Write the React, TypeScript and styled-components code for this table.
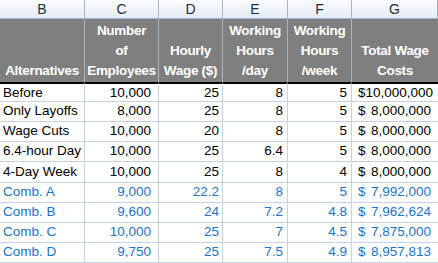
import React from 'react';
import styled, { createGlobalStyle } from 'styled-components';

const GlobalStyle = createGlobalStyle`
  html, body {
    margin: 0;
    padding: 0;
    background: #ffffff;
    overflow: hidden;
  }
  body {
    font-family: "Liberation Sans", Arial, sans-serif;
  }
`;

const GRID = '#c3d2e6';
const BLUE = '#1b74c8';

interface RowData {
  name: string;
  employees: string;
  wage: string;
  hoursDay: string;
  hoursWeek: string;
  cost: string;
  blue?: boolean;
}

const rows: RowData[] = [
  { name: 'Before', employees: '10,000', wage: '25', hoursDay: '8', hoursWeek: '5', cost: '10,000,000' },
  { name: 'Only Layoffs', employees: '8,000', wage: '25', hoursDay: '8', hoursWeek: '5', cost: '8,000,000' },
  { name: 'Wage Cuts', employees: '10,000', wage: '20', hoursDay: '8', hoursWeek: '5', cost: '8,000,000' },
  { name: '6.4-hour Day', employees: '10,000', wage: '25', hoursDay: '6.4', hoursWeek: '5', cost: '8,000,000' },
  { name: '4-Day Week', employees: '10,000', wage: '25', hoursDay: '8', hoursWeek: '4', cost: '8,000,000' },
  { name: 'Comb. A', employees: '9,000', wage: '22.2', hoursDay: '8', hoursWeek: '5', cost: '7,992,000', blue: true },
  { name: 'Comb. B', employees: '9,600', wage: '24', hoursDay: '7.2', hoursWeek: '4.8', cost: '7,962,624', blue: true },
  { name: 'Comb. C', employees: '10,000', wage: '25', hoursDay: '7', hoursWeek: '4.5', cost: '7,875,000', blue: true },
  { name: 'Comb. D', employees: '9,750', wage: '25', hoursDay: '7.5', hoursWeek: '4.9', cost: '8,957,813', blue: true },
];

const Sheet = styled.div`
  display: grid;
  grid-template-columns: 85px 74px 64px 65px 64px 86px;
  width: 438px;
  height: 263px;
  overflow: hidden;
`;

const ColLetter = styled.div`
  height: 18px;
  border-bottom: 1px solid #9eb6ce;
  border-right: 1px solid #9eb6ce;
  background: linear-gradient(#fbfcfe, #e4ebf5);
  color: #1d2d42;
  font-size: 14px;
  line-height: 18px;
  text-align: center;
  box-sizing: content-box;
  &:last-child {
    border-right: none;
  }
`;

const HeadCell = styled.div`
  height: 63px;
  background: #7f7f7f;
  border-right: 1px solid #a7b4c4;
  color: #ffffff;
  font-weight: bold;
  font-size: 13.5px;
  letter-spacing: -0.3px;
  line-height: 20px;
  display: flex;
  flex-direction: column;
  justify-content: flex-end;
  align-items: center;
  text-align: center;
  white-space: nowrap;
  padding-bottom: 1px;
  box-sizing: border-box;
`;

const Cell = styled.div<{ $align?: 'left' | 'right'; $blue?: boolean; $first?: boolean; $pad?: number }>`
  height: 20px;
  box-sizing: border-box;
  border-right: 1px solid ${GRID};
  border-bottom: 1px solid ${GRID};
  border-top: ${(p) => (p.$first ? '2px solid #000' : 'none')};
  color: ${(p) => (p.$blue ? BLUE : '#000')};
  font-size: 13.5px;
  line-height: 17px;
  white-space: nowrap;
  text-align: ${(p) => p.$align ?? 'right'};
  padding: 0 ${(p) => p.$pad ?? 5}px 0 3px;
`;

const MoneyCell = styled(Cell)`
  display: flex;
  justify-content: space-between;
  padding: 0 7px 0 6px;
  border-right: none;
`;

const App: React.FC = () => {
  return (
    <>
      <GlobalStyle />
      <Sheet>
        {['B', 'C', 'D', 'E', 'F', 'G'].map((l) => (
          <ColLetter key={l}>{l}</ColLetter>
        ))}
        <HeadCell>Alternatives</HeadCell>
        <HeadCell>
          <span>Number</span>
          <span>of</span>
          <span>Employees</span>
        </HeadCell>
        <HeadCell>
          <span>Hourly</span>
          <span>Wage ($)</span>
        </HeadCell>
        <HeadCell>
          <span>Working</span>
          <span>Hours</span>
          <span>/day</span>
        </HeadCell>
        <HeadCell>
          <span>Working</span>
          <span>Hours</span>
          <span>/week</span>
        </HeadCell>
        <HeadCell style={{ borderRight: 'none' }}>
          <span>Total Wage</span>
          <span>Costs</span>
        </HeadCell>
        {rows.map((r, i) => (
          <React.Fragment key={r.name}>
            <Cell $align="left" $blue={r.blue} $first={i === 0}>{r.name}</Cell>
            <Cell $blue={r.blue} $first={i === 0} $pad={7}>{r.employees}</Cell>
            <Cell $blue={r.blue} $first={i === 0} $pad={3}>{r.wage}</Cell>
            <Cell $blue={r.blue} $first={i === 0} $pad={4}>{r.hoursDay}</Cell>
            <Cell $blue={r.blue} $first={i === 0} $pad={4}>{r.hoursWeek}</Cell>
            <MoneyCell $blue={r.blue} $first={i === 0}>
              <span>$</span>
              <span>{r.cost}</span>
            </MoneyCell>
          </React.Fragment>
        ))}
      </Sheet>
    </>
  );
};

export default App;
